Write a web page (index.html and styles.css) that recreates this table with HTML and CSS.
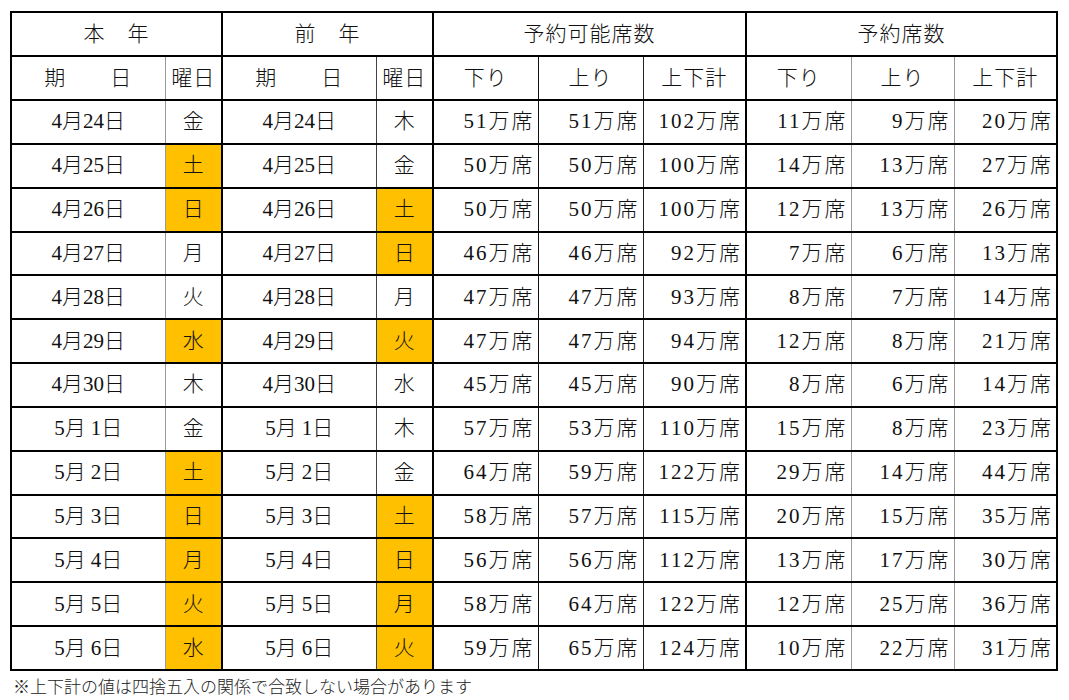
FILE: index.html
```html
<!DOCTYPE html>
<html lang="ja">
<head>
<meta charset="utf-8">
<link rel="stylesheet" href="styles.css">
</head>
<body>
<div class="page">
<table class="t">
<colgroup>
<col class="c154"><col class="c57"><col class="c154"><col class="c57"><col class="c105"><col class="c105"><col class="c103"><col class="c105"><col class="c103"><col class="c103">
</colgroup>
<tr class="h1"><td colspan="2">本　年</td><td colspan="2">前　年</td><td colspan="3">予約可能席数</td><td colspan="3">予約席数</td></tr>
<tr class="r h2"><td>期　　日</td><td>曜日</td><td>期　　日</td><td>曜日</td><td>下り</td><td>上り</td><td>上下計</td><td>下り</td><td>上り</td><td>上下計</td></tr>
<tr class="r d"><td>4月24日</td><td>金</td><td>4月24日</td><td>木</td><td class="n">51万席</td><td class="n">51万席</td><td class="n">102万席</td><td class="n">11万席</td><td class="n">9万席</td><td class="n">20万席</td></tr>
<tr class="r d"><td>4月25日</td><td class="o">土</td><td>4月25日</td><td>金</td><td class="n">50万席</td><td class="n">50万席</td><td class="n">100万席</td><td class="n">14万席</td><td class="n">13万席</td><td class="n">27万席</td></tr>
<tr class="r d"><td>4月26日</td><td class="o">日</td><td>4月26日</td><td class="o">土</td><td class="n">50万席</td><td class="n">50万席</td><td class="n">100万席</td><td class="n">12万席</td><td class="n">13万席</td><td class="n">26万席</td></tr>
<tr class="r d"><td>4月27日</td><td>月</td><td>4月27日</td><td class="o">日</td><td class="n">46万席</td><td class="n">46万席</td><td class="n">92万席</td><td class="n">7万席</td><td class="n">6万席</td><td class="n">13万席</td></tr>
<tr class="r d"><td>4月28日</td><td>火</td><td>4月28日</td><td>月</td><td class="n">47万席</td><td class="n">47万席</td><td class="n">93万席</td><td class="n">8万席</td><td class="n">7万席</td><td class="n">14万席</td></tr>
<tr class="r d"><td>4月29日</td><td class="o">水</td><td>4月29日</td><td class="o">火</td><td class="n">47万席</td><td class="n">47万席</td><td class="n">94万席</td><td class="n">12万席</td><td class="n">8万席</td><td class="n">21万席</td></tr>
<tr class="r d"><td>4月30日</td><td>木</td><td>4月30日</td><td>水</td><td class="n">45万席</td><td class="n">45万席</td><td class="n">90万席</td><td class="n">8万席</td><td class="n">6万席</td><td class="n">14万席</td></tr>
<tr class="r d"><td>5月 1日</td><td>金</td><td>5月 1日</td><td>木</td><td class="n">57万席</td><td class="n">53万席</td><td class="n">110万席</td><td class="n">15万席</td><td class="n">8万席</td><td class="n">23万席</td></tr>
<tr class="r d"><td>5月 2日</td><td class="o">土</td><td>5月 2日</td><td>金</td><td class="n">64万席</td><td class="n">59万席</td><td class="n">122万席</td><td class="n">29万席</td><td class="n">14万席</td><td class="n">44万席</td></tr>
<tr class="r d"><td>5月 3日</td><td class="o">日</td><td>5月 3日</td><td class="o">土</td><td class="n">58万席</td><td class="n">57万席</td><td class="n">115万席</td><td class="n">20万席</td><td class="n">15万席</td><td class="n">35万席</td></tr>
<tr class="r d"><td>5月 4日</td><td class="o">月</td><td>5月 4日</td><td class="o">日</td><td class="n">56万席</td><td class="n">56万席</td><td class="n">112万席</td><td class="n">13万席</td><td class="n">17万席</td><td class="n">30万席</td></tr>
<tr class="r d"><td>5月 5日</td><td class="o">火</td><td>5月 5日</td><td class="o">月</td><td class="n">58万席</td><td class="n">64万席</td><td class="n">122万席</td><td class="n">12万席</td><td class="n">25万席</td><td class="n">36万席</td></tr>
<tr class="r d"><td>5月 6日</td><td class="o">水</td><td>5月 6日</td><td class="o">火</td><td class="n">59万席</td><td class="n">65万席</td><td class="n">124万席</td><td class="n">10万席</td><td class="n">22万席</td><td class="n">31万席</td></tr>
</table>
<p class="note">※上下計の値は四捨五入の関係で合致しない場合があります</p>
</div>
</body>
</html>
```
FILE: styles.css
```css
html, body {
  margin: 0;
  padding: 0;
  background: #fff;
}
.page {
  padding: 11px 0 0 10px;
  font-family: "Liberation Serif", "Noto Sans CJK JP", serif;
  color: #111;
}
.c154 { width: 154px; }
.c57 { width: 57px; }
.c105 { width: 105px; }
.c103 { width: 103px; }
.t {
  border-collapse: collapse;
  table-layout: fixed;
  width: 1046px;
  font-size: 21px;
  font-weight: 300;
}
.t td {
  border: 2px solid #000;
  padding: 0;
  text-align: center;
  white-space: pre;
  line-height: 1;
}
.h1 td { height: 42px; letter-spacing: 1px; }
.h2 td { height: 42px; letter-spacing: 1px; }
.d td { height: 41.85px; }
.d td.n { text-align: right; padding-right: 3px; letter-spacing: 2px; }
.d td.o { background: #ffc000; }
.r td:nth-child(1) { border-right: 1px solid #9a9a9a; }
.r td:nth-child(2) { border-left: 1px solid #9a9a9a; }
.r td:nth-child(3) { border-right: 1px solid #444; }
.r td:nth-child(4) { border-left: 1px solid #444; }
.r td:nth-child(5) { border-right: 1px solid #111; }
.r td:nth-child(6) { border-left: 1px solid #111; border-right: 1px solid #222; }
.r td:nth-child(7) { border-left: 1px solid #222; }
.r td:nth-child(8) { border-right: 1px solid #9a9a9a; }
.r td:nth-child(9) { border-left: 1px solid #9a9a9a; border-right: 1px solid #9a9a9a; }
.r td:nth-child(10) { border-left: 1px solid #9a9a9a; }
.note {
  margin: 5px 0 0 3px;
  font-size: 17px;
  line-height: 20px;
  font-family: "Noto Sans CJK JP", sans-serif;
  font-weight: 300;
  color: #222;
}
```
